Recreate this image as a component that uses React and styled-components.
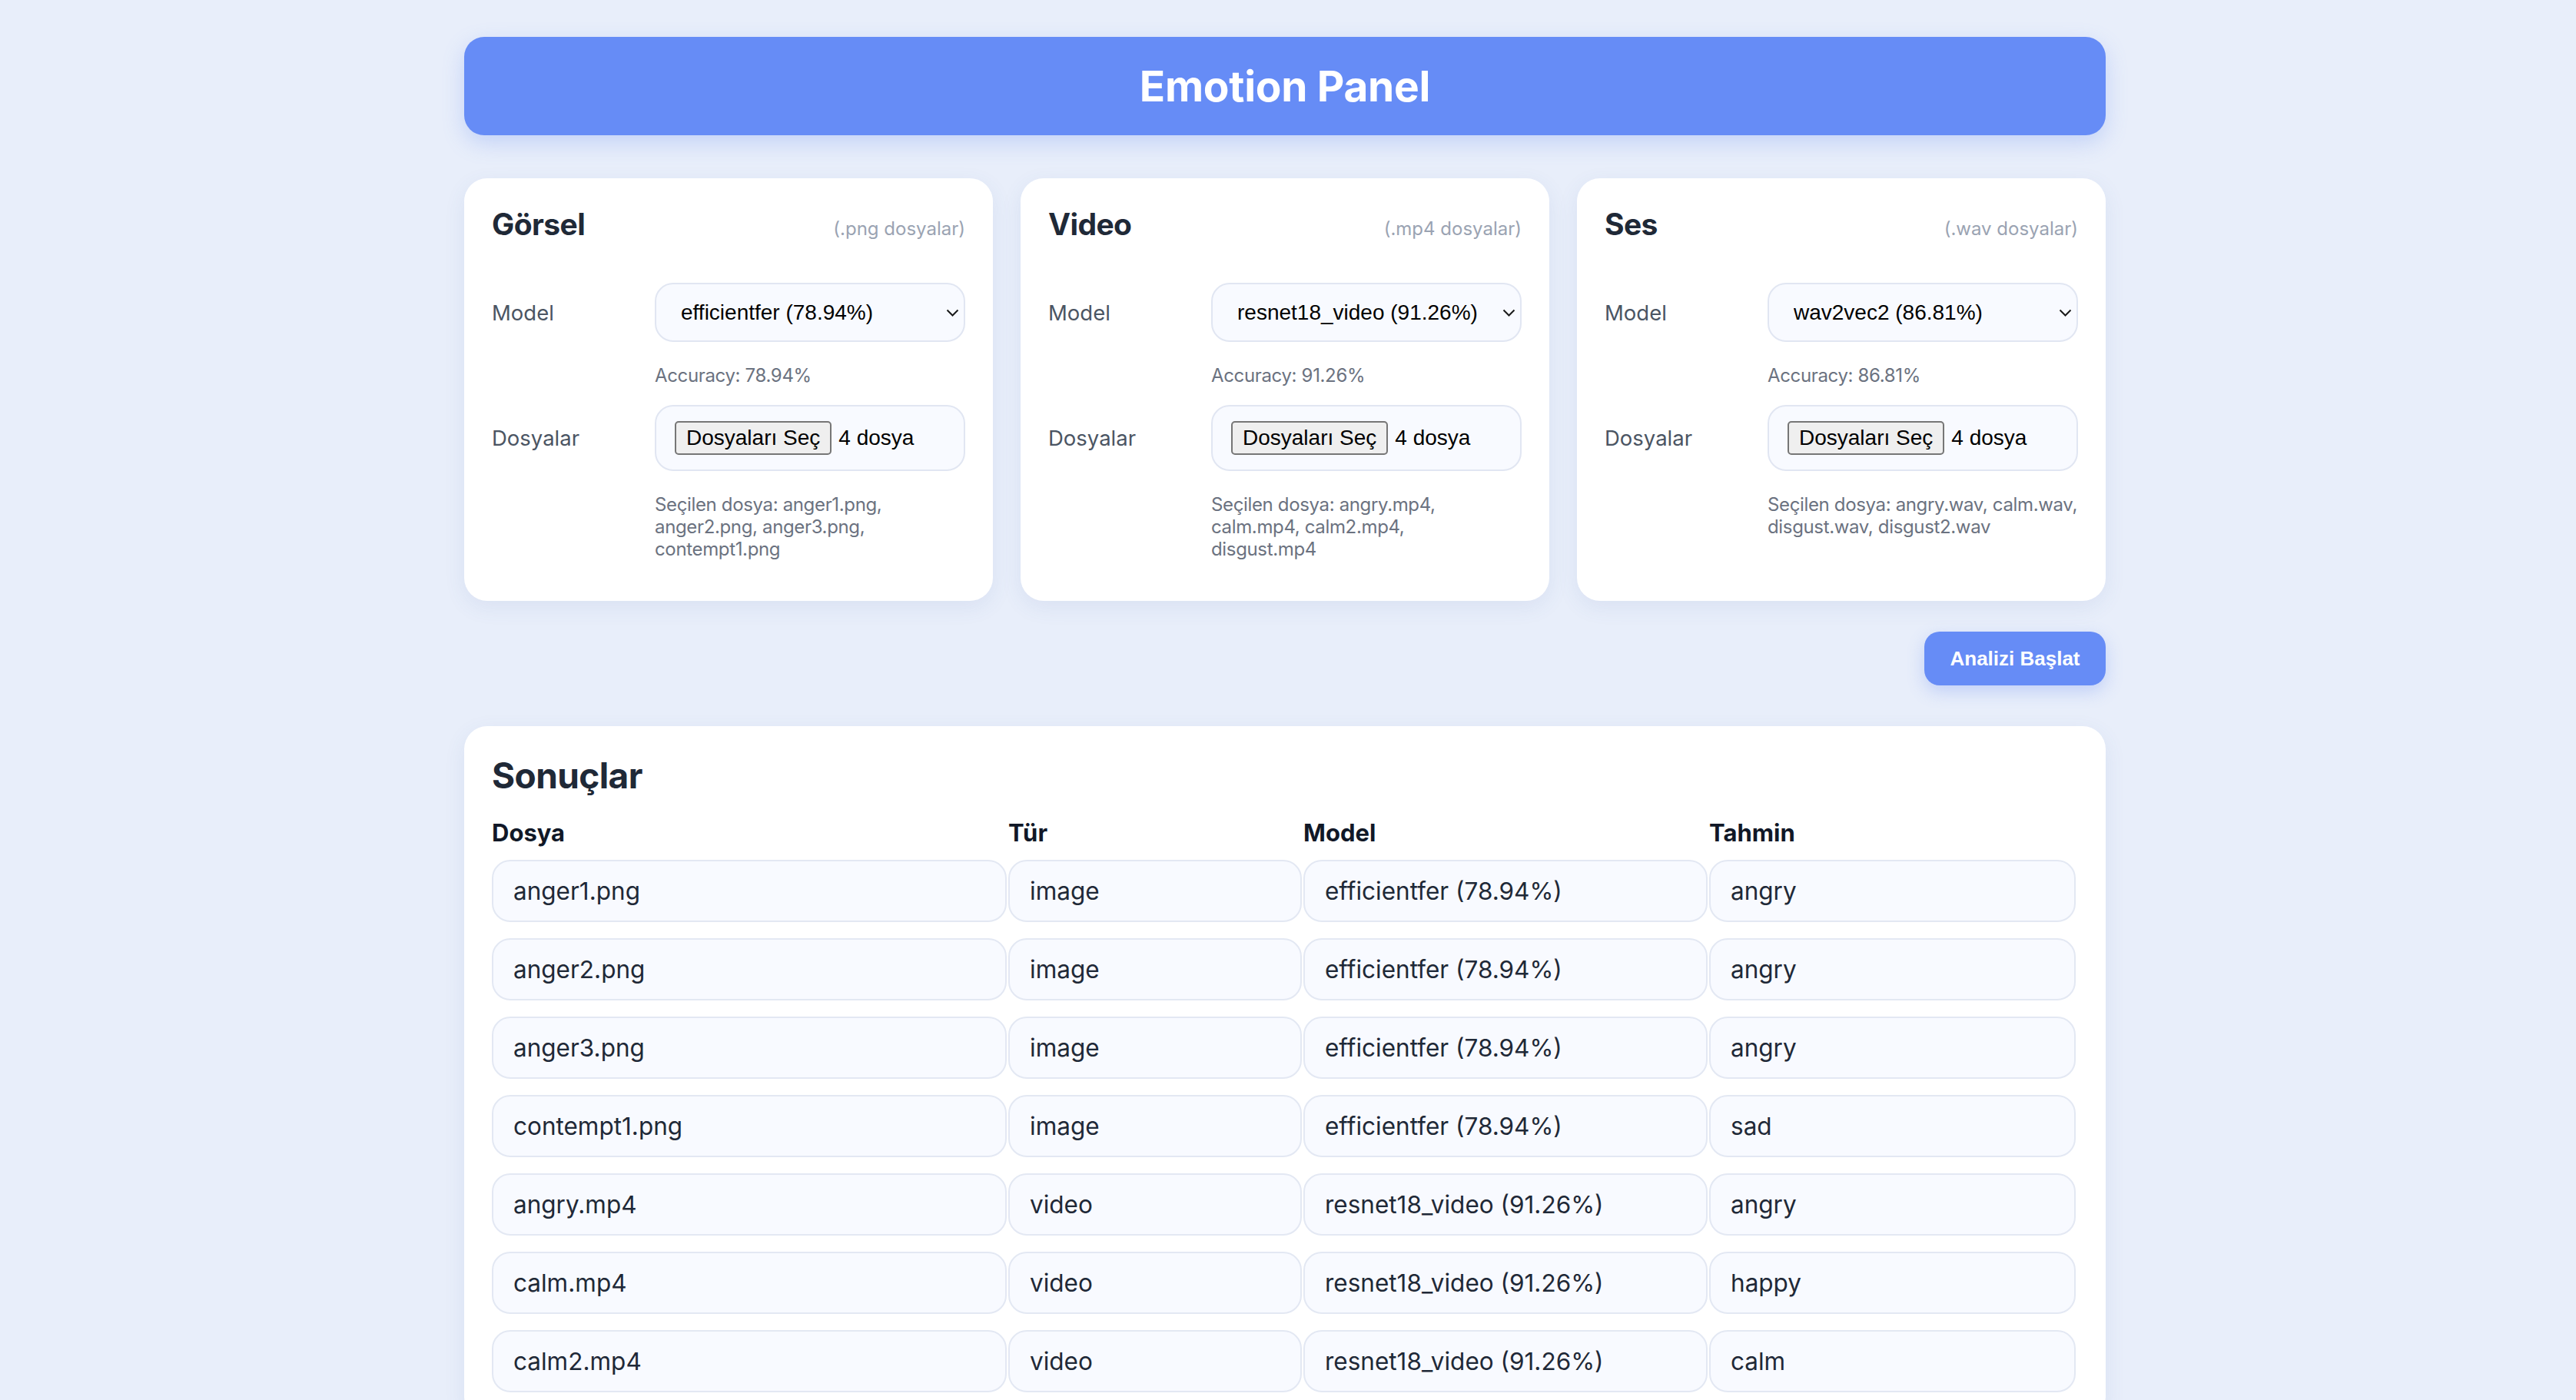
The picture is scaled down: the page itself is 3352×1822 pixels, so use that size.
import React from 'react';
import styled, { createGlobalStyle } from 'styled-components';

const GlobalStyle = createGlobalStyle`
  html, body {
    margin: 0;
    padding: 0;
    background: #e8eefa;
    font-family: Inter, "Noto Sans", "Liberation Sans", sans-serif;
    color: #1f2937;
  }
  ::-webkit-scrollbar {
    display: none;
  }
`;

const Page = styled.div`
  padding: 48px 8px 60px 0;
`;

const Container = styled.div`
  width: 2136px;
  margin: 0 auto;
  display: flex;
  flex-direction: column;
`;

const Header = styled.header`
  height: 128px;
  display: flex;
  align-items: center;
  justify-content: center;
  background: #668cf6;
  border-radius: 26px;
  box-shadow: 0 10px 28px rgba(102, 140, 246, 0.28);
`;

const Title = styled.h1`
  margin: 0;
  color: #fff;
  font-size: 55px;
  font-weight: 700;
  letter-spacing: -0.3px;
`;

const CardGrid = styled.div`
  display: grid;
  grid-template-columns: repeat(3, minmax(0, 1fr));
  gap: 36px;
  margin-top: 56px;
`;

const Card = styled.section`
  min-width: 0;
  background: #fff;
  border-radius: 30px;
  padding: 36px 36px 53px;
  box-shadow: 0 8px 28px rgba(70, 95, 170, 0.09);
`;

const CardHead = styled.div`
  display: flex;
  justify-content: space-between;
  align-items: baseline;
  height: 48px;
  margin-bottom: 52px;
`;

const CardTitle = styled.h2`
  margin: 0;
  font-size: 39px;
  line-height: 48px;
  font-weight: 700;
  letter-spacing: -0.6px;
  color: #1f2937;
`;

const Ext = styled.span`
  font-size: 24px;
  color: #9aa3b2;
`;

const Row = styled.div`
  display: flex;
  align-items: center;
  margin-top: ${({ $top }) => $top || 0}px;
`;

const Label = styled.label`
  width: 212px;
  flex: none;
  font-size: 27.5px;
  color: #4b5563;
`;

const SelectWrap = styled.div`
  position: relative;
  flex: 1;
  min-width: 0;
`;

const Select = styled.select`
  appearance: none;
  width: 100%;
  height: 77px;
  box-sizing: border-box;
  padding: 0 32px;
  border: 2px solid #e1e6f2;
  border-radius: 24px;
  background: #f8faff;
  font-family: "Liberation Sans", Arial, sans-serif;
  font-size: 28px;
  color: #000;
  outline: none;
`;

const Chevron = styled.svg`
  position: absolute;
  right: 8px;
  top: 34px;
  pointer-events: none;
`;

const Hint = styled.div`
  margin: ${({ $top }) => $top}px 0 0 212px;
  font-size: 24px;
  line-height: ${({ $lh }) => $lh}px;
  letter-spacing: -0.35px;
  color: #6b7280;
  white-space: nowrap;
`;

const FileBox = styled.div`
  flex: 1;
  min-width: 0;
  height: 86px;
  box-sizing: border-box;
  display: flex;
  align-items: center;
  gap: 9px;
  padding: 0 24px;
  border: 2px solid #e1e6f2;
  border-radius: 24px;
  background: #f8faff;
  font-family: "Liberation Sans", Arial, sans-serif;
  font-size: 28px;
  color: #000;
`;

const FileButton = styled.button`
  height: 44px;
  padding: 0 13px;
  border: 2px solid #767676;
  border-radius: 5px;
  background: #efefef;
  font-family: "Liberation Sans", Arial, sans-serif;
  font-size: 28px;
  color: #000;
`;

const Actions = styled.div`
  display: flex;
  justify-content: flex-end;
  margin-top: 40px;
`;

const StartButton = styled.button`
  width: 236px;
  height: 70px;
  border: none;
  border-radius: 20px;
  background: #668cf6;
  color: #fff;
  font-family: "Liberation Sans", Arial, sans-serif;
  font-weight: 700;
  font-size: 26px;
  box-shadow: 0 8px 22px rgba(102, 140, 246, 0.3);
  cursor: pointer;
`;

const Results = styled.section`
  margin-top: 53px;
  background: #fff;
  border-radius: 30px;
  padding: 36px;
  box-shadow: 0 8px 28px rgba(70, 95, 170, 0.09);
`;

const ResultsTitle = styled.h2`
  margin: 0;
  font-size: 46px;
  line-height: 56px;
  font-weight: 700;
  letter-spacing: -0.6px;
  color: #1f2937;
`;

const Table = styled.div`
  display: grid;
  grid-template-columns: 670px 382px 526px 477px;
  column-gap: 2px;
  row-gap: 21px;
  margin-top: 28px;
`;

const HeadCell = styled.div`
  font-size: 31px;
  line-height: 38px;
  font-weight: 700;
  color: #111827;
  margin-bottom: -5px;
`;

const Cell = styled.div`
  height: 81px;
  box-sizing: border-box;
  display: flex;
  align-items: center;
  padding: 0 26px;
  border: 2px solid #e3e8f3;
  border-radius: 24px;
  background: #f8faff;
  font-size: 31.5px;
  color: #1f2937;
`;

const panels = [
  {
    title: 'Görsel',
    ext: '(.png dosyalar)',
    model: 'efficientfer (78.94%)',
    acc: '78.94%',
    files: ['Seçilen dosya: anger1.png,', 'anger2.png, anger3.png,', 'contempt1.png'],
  },
  {
    title: 'Video',
    ext: '(.mp4 dosyalar)',
    model: 'resnet18_video (91.26%)',
    acc: '91.26%',
    files: ['Seçilen dosya: angry.mp4,', 'calm.mp4, calm2.mp4,', 'disgust.mp4'],
  },
  {
    title: 'Ses',
    ext: '(.wav dosyalar)',
    model: 'wav2vec2 (86.81%)',
    acc: '86.81%',
    files: ['Seçilen dosya: angry.wav, calm.wav,', 'disgust.wav, disgust2.wav'],
  },
];

const results = [
  ['anger1.png', 'image', 'efficientfer (78.94%)', 'angry'],
  ['anger2.png', 'image', 'efficientfer (78.94%)', 'angry'],
  ['anger3.png', 'image', 'efficientfer (78.94%)', 'angry'],
  ['contempt1.png', 'image', 'efficientfer (78.94%)', 'sad'],
  ['angry.mp4', 'video', 'resnet18_video (91.26%)', 'angry'],
  ['calm.mp4', 'video', 'resnet18_video (91.26%)', 'happy'],
  ['calm2.mp4', 'video', 'resnet18_video (91.26%)', 'calm'],
];

const Panel = ({ p }) => (
  <Card>
    <CardHead>
      <CardTitle>{p.title}</CardTitle>
      <Ext>{p.ext}</Ext>
    </CardHead>
    <Row>
      <Label>Model</Label>
      <SelectWrap>
        <Select defaultValue={p.model}>
          <option>{p.model}</option>
        </Select>
        <Chevron width="17" height="10" viewBox="0 0 17 10">
          <polyline points="1.5,1.5 8.5,8.5 15.5,1.5" fill="none" stroke="#1a1a1a" strokeWidth="2" />
        </Chevron>
      </SelectWrap>
    </Row>
    <Hint $top={29} $lh={30}>Accuracy: {p.acc}</Hint>
    <Row $top={23}>
      <Label>Dosyalar</Label>
      <FileBox>
        <FileButton type="button">Dosyaları Seç</FileButton>
        <span>4 dosya</span>
      </FileBox>
    </Row>
    <Hint $top={29} $lh={29}>
      {p.files.map((line, i) => (
        <React.Fragment key={i}>
          {i > 0 && <br />}
          {line}
        </React.Fragment>
      ))}
    </Hint>
  </Card>
);

export default function App() {
  return (
    <>
      <GlobalStyle />
      <Page>
        <Container>
          <Header>
            <Title>Emotion Panel</Title>
          </Header>
          <CardGrid>
            {panels.map((p) => (
              <Panel key={p.title} p={p} />
            ))}
          </CardGrid>
          <Actions>
            <StartButton>Analizi Başlat</StartButton>
          </Actions>
          <Results>
            <ResultsTitle>Sonuçlar</ResultsTitle>
            <Table>
              <HeadCell>Dosya</HeadCell>
              <HeadCell>Tür</HeadCell>
              <HeadCell>Model</HeadCell>
              <HeadCell>Tahmin</HeadCell>
              {results.map((r) =>
                r.map((v, i) => <Cell key={r[0] + i}>{v}</Cell>)
              )}
            </Table>
          </Results>
        </Container>
      </Page>
    </>
  );
}
